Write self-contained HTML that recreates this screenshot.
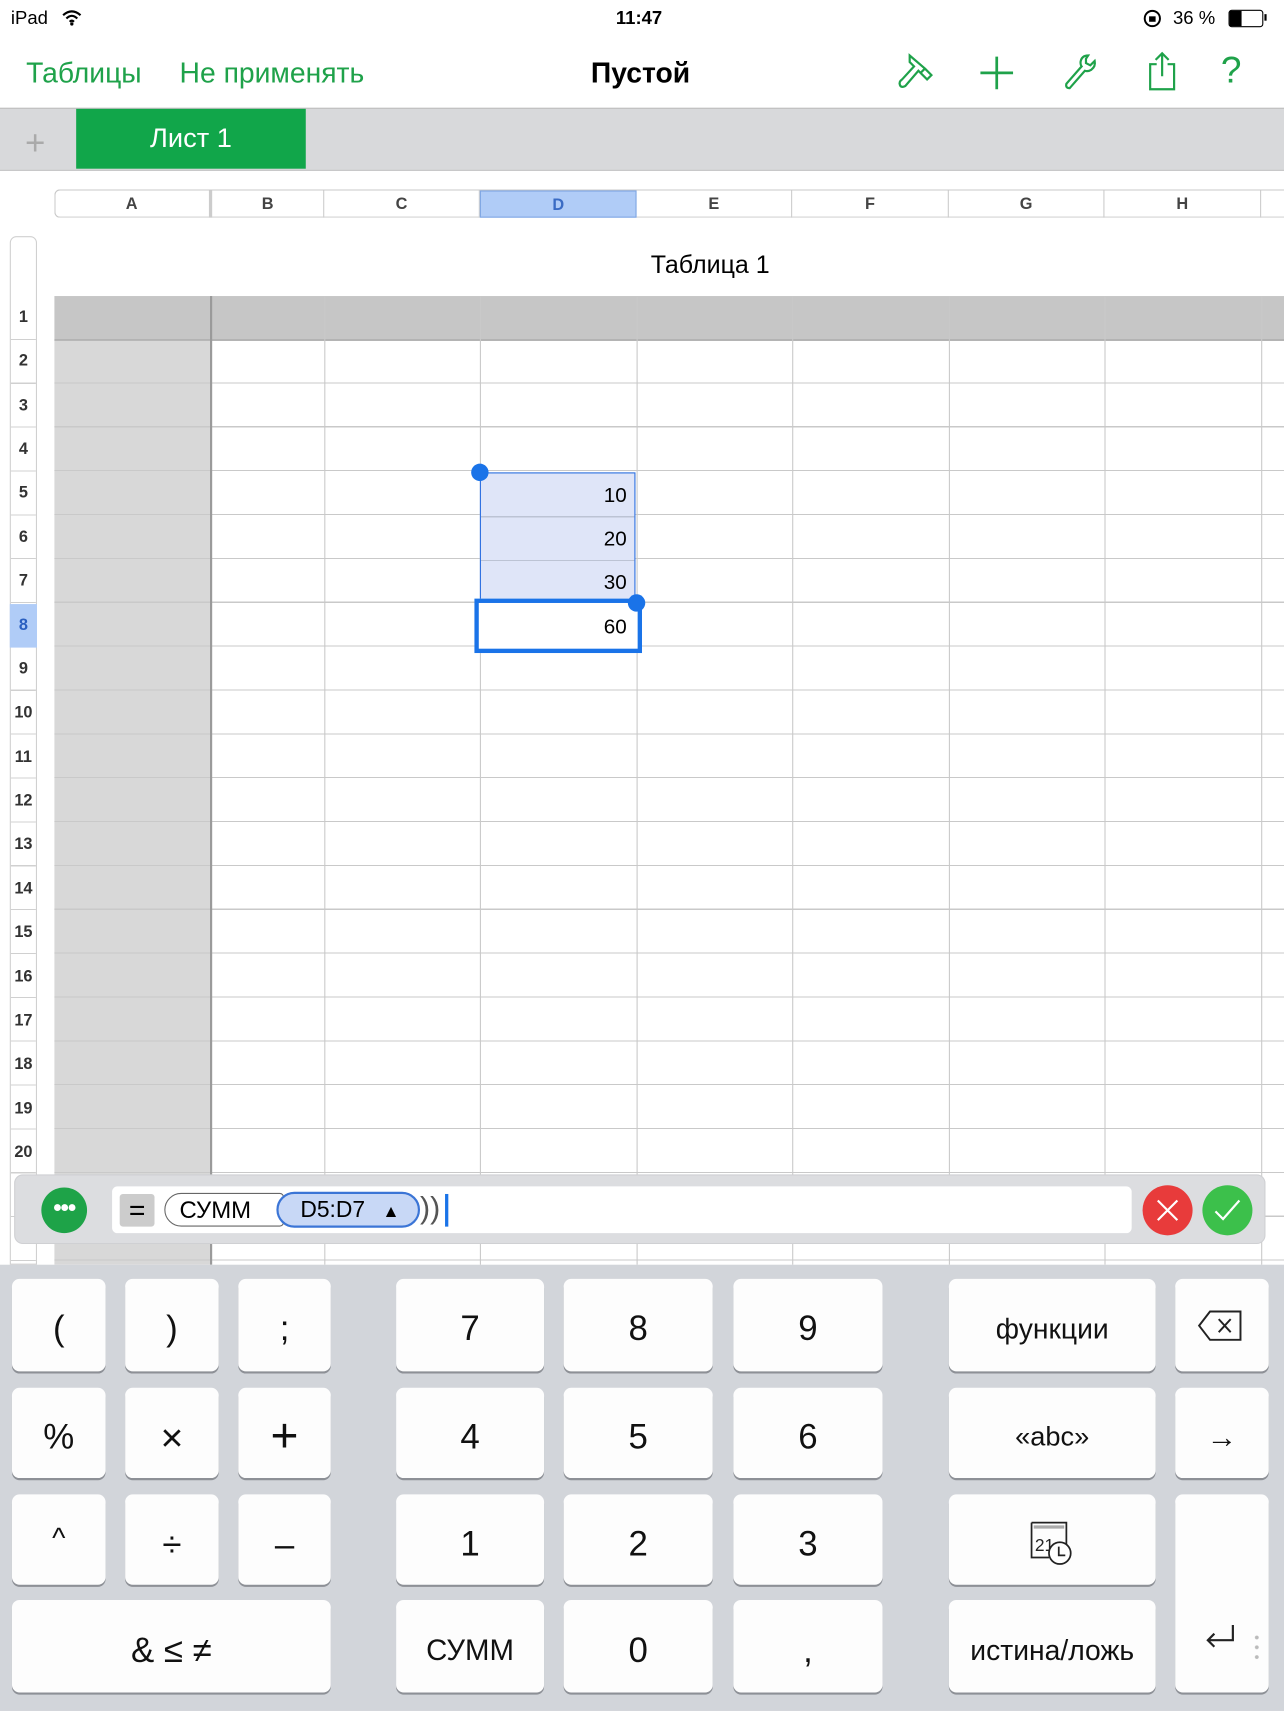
<!DOCTYPE html>
<html><head><meta charset="utf-8"><style>
html,body{margin:0;padding:0;width:1284px;height:1711px;overflow:hidden;background:#fff;}
#s{position:absolute;left:0;top:0;width:1180px;height:1572px;transform:scale(1.08814,1.0884);transform-origin:0 0;font-family:"Liberation Sans","DejaVu Sans",sans-serif;color:#000;}
.a{position:absolute;}
.g{color:#1fa24a;font-size:26px;}
.ch{position:absolute;top:175px;height:25px;line-height:25px;text-align:center;font-size:15px;font-weight:bold;color:#444;border-right:1px solid #ccc;box-sizing:border-box;}
.rn{position:absolute;left:9px;width:25px;font-size:15px;font-weight:bold;color:#333;text-align:center;line-height:40px;height:40px;}
.vl{position:absolute;top:272px;height:890px;width:1px;background:#c9c9c9;}
.k{position:absolute;background:#fdfdfd;border-radius:7px;box-shadow:0 2px 0 #8d9096;text-align:center;font-size:32px;color:#111;}
.num{position:absolute;right:10px;font-size:19px;}
</style></head><body><div id="s">
<div class="a" style="left:10px;top:7px;font-size:17px;">iPad</div>
<svg class="a" style="left:56px;top:8px" width="20" height="16" viewBox="0 0 20 16"><path d="M2 6 Q10 -1 18 6 M5 9 Q10 4 15 9 M8 12 Q10 10 12 12" stroke="#000" stroke-width="2" fill="none"/><circle cx="10" cy="14" r="1.5"/></svg>
<div class="a" style="left:566px;top:7px;font-size:17px;font-weight:bold;">11:47</div>
<svg class="a" style="left:1050px;top:8px" width="18" height="18" viewBox="0 0 18 18"><circle cx="9" cy="9" r="7" stroke="#000" stroke-width="1.8" fill="none"/><rect x="6" y="7" width="6" height="5" fill="#000"/></svg>
<div class="a" style="left:1078px;top:7px;font-size:17px;">36 %</div>
<div class="a" style="left:1129px;top:9px;width:30px;height:14px;border:1.5px solid #000;border-radius:3px;"><div style="width:11px;height:14px;background:#000"></div></div>
<div class="a" style="left:1162px;top:13px;width:2px;height:6px;background:#000"></div>
<div class="a g" style="left:24px;top:52px;">Таблицы</div>
<div class="a g" style="left:165px;top:52px;">Не применять</div>
<div class="a" style="left:543px;top:52px;font-size:26px;font-weight:bold;">Пустой</div>
<svg class="a" style="left:822px;top:47px" width="40" height="38" viewBox="0 0 40 38" fill="none" stroke="#1fa24a" stroke-width="2"><path d="M14 4 L28 16 L24 20 L22 18 L10 32 Q6 34 5 31 Q4 28 7 26 L18 14 L14 10 Z M28 16 L34 22 L30 26 L24 20"/></svg>
<svg class="a" style="left:899px;top:50px" width="34" height="34" viewBox="0 0 34 34" stroke="#1fa24a" stroke-width="2.5"><path d="M17 2 V32 M2 17 H32"/></svg>
<svg class="a" style="left:974px;top:47px" width="36" height="38" viewBox="0 0 36 38" fill="none" stroke="#1fa24a" stroke-width="2"><path d="M26 4 Q20 4 19 10 Q19 13 20 14 L6 30 Q5 34 9 34 L23 18 Q26 19 29 17 Q33 14 32 9 L28 13 L24 11 L24 7 Z"/></svg>
<svg class="a" style="left:1054px;top:47px" width="28" height="38" viewBox="0 0 28 38" fill="none" stroke="#1fa24a" stroke-width="2"><path d="M9 12 H3 V35 H25 V12 H19 M14 2 V23 M8 8 L14 2 L20 8"/></svg>
<div class="a" style="left:1122px;top:46px;font-size:34px;color:#1fa24a;">?</div>
<div class="a" style="left:0;top:99px;width:1180px;height:56px;background:#d8d9db;border-top:1px solid #bdbdbd;border-bottom:1px solid #c5c5c5;"></div>
<div class="a" style="left:23px;top:113px;font-size:32px;color:#aaa;font-weight:300;">+</div>
<div class="a" style="left:70px;top:100px;width:211px;height:55px;background:#11a64a;color:#fff;font-size:25px;text-align:center;line-height:55px;">Лист 1</div>
<div class="a" style="left:50px;top:174px;width:1130px;height:26px;border:1px solid #c8c8c8;border-right:none;border-radius:5px 0 0 5px;box-sizing:border-box;"></div>
<div class="ch" style="left:50px;width:143px;">A</div>
<div class="ch" style="left:193px;width:105px;border-left:2px solid #ccc">B</div>
<div class="ch" style="left:298px;width:143px;">C</div>
<div class="ch" style="left:441px;width:144px;background:#b0ccf7;border:1px solid #7fa6e3;color:#3a6bc4;">D</div>
<div class="ch" style="left:585px;width:143px;">E</div>
<div class="ch" style="left:728px;width:144px;">F</div>
<div class="ch" style="left:872px;width:143px;">G</div>
<div class="ch" style="left:1015px;width:144px;">H</div>
<div class="a" style="left:598px;top:230px;font-size:23px;">Таблица 1</div>
<div class="a" style="left:50px;top:272px;width:1130px;height:40px;background:#c6c6c6;border-bottom:1px solid #999;"></div>
<div class="a" style="left:50px;top:313px;width:143px;height:849px;background:#d8d8d8;"></div>
<div class="a" style="left:50px;top:312px;width:1130px;height:850px;background:repeating-linear-gradient(to bottom,transparent 0,transparent 39.3px,#c9c9c9 39.3px,#c9c9c9 40.3px);"></div>
<div class="vl" style="left:193px;width:2px;background:#9a9a9a"></div>
<div class="vl" style="left:298px"></div><div class="vl" style="left:441px"></div><div class="vl" style="left:585px"></div><div class="vl" style="left:728px"></div><div class="vl" style="left:872px"></div><div class="vl" style="left:1015px"></div><div class="vl" style="left:1159px"></div>
<div class="a" style="left:441px;top:434px;width:143px;height:121px;background:#dfe5f8;border:1.5px solid #2a6ee0;box-sizing:border-box;background-image:repeating-linear-gradient(to bottom,transparent 0,transparent 39.3px,#bcc3d4 39.3px,#bcc3d4 40.3px);"></div>
<div class="num" style="left:0;width:576px;text-align:right;top:445px;">10</div>
<div class="num" style="left:0;width:576px;text-align:right;top:485px;">20</div>
<div class="num" style="left:0;width:576px;text-align:right;top:525px;">30</div>
<div class="a" style="left:436px;top:550px;width:154px;height:50px;border:4px solid #1a73e8;box-sizing:border-box;background:#fff;"></div>
<div class="num" style="left:0;width:576px;text-align:right;top:566px;">60</div>
<div class="a" style="left:433px;top:426px;width:16px;height:16px;border-radius:50%;background:#1a73e8;"></div>
<div class="a" style="left:577px;top:546px;width:16px;height:16px;border-radius:50%;background:#1a73e8;"></div>
<div class="a" style="left:9px;top:217px;width:25px;height:945px;border:1px solid #d0d0d0;border-radius:6px 6px 0 0;box-sizing:border-box;"></div>
<div class="a" style="left:10px;top:272px;width:23px;height:890px;background:repeating-linear-gradient(to bottom,transparent 0,transparent 39.3px,#d0d0d0 39.3px,#d0d0d0 40.3px);"></div>
<div class="a" style="left:9px;top:555px;width:25px;height:40px;background:#b0ccf7;"></div>
<div class="rn" style="top:272px">1</div><div class="rn" style="top:312px">2</div><div class="rn" style="top:353px">3</div><div class="rn" style="top:393px">4</div><div class="rn" style="top:433px">5</div><div class="rn" style="top:474px">6</div><div class="rn" style="top:514px">7</div><div class="rn" style="top:555px;color:#2a5fc0">8</div><div class="rn" style="top:595px">9</div><div class="rn" style="top:635px">10</div><div class="rn" style="top:676px">11</div><div class="rn" style="top:716px">12</div><div class="rn" style="top:756px">13</div><div class="rn" style="top:797px">14</div><div class="rn" style="top:837px">15</div><div class="rn" style="top:878px">16</div><div class="rn" style="top:918px">17</div><div class="rn" style="top:958px">18</div><div class="rn" style="top:999px">19</div><div class="rn" style="top:1039px">20</div>
<div class="a" style="left:13px;top:1079px;width:1150px;height:64px;background:#dcdde0;border-radius:8px;border:1px solid #cfd0d3;box-sizing:border-box;"></div>
<div class="a" style="left:38px;top:1091px;width:42px;height:42px;border-radius:50%;background:#1ea348;color:#fff;font-size:22px;text-align:center;line-height:38px;font-weight:bold;letter-spacing:-1px;">•••</div>
<div class="a" style="left:103px;top:1090px;width:937px;height:43px;background:#fff;border-radius:5px;"></div>
<div class="a" style="left:110px;top:1097px;width:32px;height:30px;background:#ccc;border-radius:3px;font-size:26px;text-align:center;line-height:30px;">=</div>
<div class="a" style="left:151px;top:1096px;width:110px;height:31px;border:1.5px solid #666;border-radius:16px 4px 4px 16px;box-sizing:border-box;font-size:22px;line-height:29px;padding-left:13px;">СУММ</div>
<div class="a" style="left:254px;top:1095px;width:132px;height:33px;border:2px solid #3b75d6;background:#c8d8f6;border-radius:17px;box-sizing:border-box;font-size:21px;line-height:29px;padding-left:20px;">D5:D7 <span style="font-size:16px;margin-left:10px">▲</span></div>
<div class="a" style="left:386px;top:1094px;font-size:28px;color:#555;">))</div>
<div class="a" style="left:409px;top:1097px;width:3px;height:30px;background:#1a73e8;"></div>
<div class="a" style="left:1050px;top:1089px;width:46px;height:46px;border-radius:50%;background:#e83b3b;"><svg width="46" height="46"><path d="M14 14 L32 32 M32 14 L14 32" stroke="#fff" stroke-width="2"/></svg></div>
<div class="a" style="left:1105px;top:1089px;width:46px;height:46px;border-radius:50%;background:#3cc04b;"><svg width="46" height="46"><path d="M12 24 L19 31 L34 14" stroke="#fff" stroke-width="2" fill="none"/></svg></div>
<div class="a" style="left:0;top:1162px;width:1180px;height:410px;background:#d2d5da;"></div>
<div class="k" style="left:11px;top:1175px;width:86px;height:85px;line-height:90px;">(</div>
<div class="k" style="left:115px;top:1175px;width:86px;height:85px;line-height:90px;">)</div>
<div class="k" style="left:219px;top:1175px;width:85px;height:85px;line-height:90px;">;</div>
<div class="k" style="left:364px;top:1175px;width:136px;height:85px;line-height:90px;">7</div>
<div class="k" style="left:518px;top:1175px;width:137px;height:85px;line-height:90px;">8</div>
<div class="k" style="left:674px;top:1175px;width:137px;height:85px;line-height:90px;">9</div>
<div class="k" style="left:872px;top:1175px;width:190px;height:85px;line-height:92px;font-size:26px;">функции</div>
<div class="k" style="left:1080px;top:1175px;width:86px;height:85px;"><svg class="a" style="left:20px;top:28px" width="44" height="30" viewBox="0 0 44 30" fill="none" stroke="#222" stroke-width="1.8"><path d="M12 2 H40 V28 H12 L2 15 Z M20 9 L31 21 M31 9 L20 21"/></svg></div>
<div class="k" style="left:11px;top:1275px;width:86px;height:83px;line-height:90px;">%</div>
<div class="k" style="left:115px;top:1275px;width:86px;height:83px;line-height:92px;font-size:36px;">×</div>
<div class="k" style="left:219px;top:1275px;width:85px;height:83px;line-height:90px;font-size:44px;font-weight:200;">+</div>
<div class="k" style="left:364px;top:1275px;width:136px;height:83px;line-height:90px;">4</div>
<div class="k" style="left:518px;top:1275px;width:137px;height:83px;line-height:90px;">5</div>
<div class="k" style="left:674px;top:1275px;width:137px;height:83px;line-height:90px;">6</div>
<div class="k" style="left:872px;top:1275px;width:190px;height:83px;line-height:90px;font-size:25px;">«abc»</div>
<div class="k" style="left:1080px;top:1275px;width:86px;height:83px;line-height:92px;font-size:28px;">→</div>
<div class="k" style="left:11px;top:1373px;width:86px;height:83px;line-height:80px;font-size:26px;">^</div>
<div class="k" style="left:115px;top:1373px;width:86px;height:83px;line-height:92px;">÷</div>
<div class="k" style="left:219px;top:1373px;width:85px;height:83px;line-height:92px;">–</div>
<div class="k" style="left:364px;top:1373px;width:136px;height:83px;line-height:90px;">1</div>
<div class="k" style="left:518px;top:1373px;width:137px;height:83px;line-height:90px;">2</div>
<div class="k" style="left:674px;top:1373px;width:137px;height:83px;line-height:90px;">3</div>
<div class="k" style="left:872px;top:1373px;width:190px;height:83px;"><svg class="a" style="left:74px;top:24px" width="44" height="42" viewBox="0 0 44 42" fill="none" stroke="#222" stroke-width="1.6"><path d="M2 2 H34 V24 M2 2 V34 H18"/><path d="M4 6 H32" stroke-width="3" stroke="#aaa"/><text x="5" y="28" font-size="16" fill="#222" stroke="none" font-family="Liberation Sans">21</text><circle cx="28" cy="30" r="10" fill="#fff"/><path d="M27 24 V32 H33"/></svg></div>
<div class="k" style="left:1080px;top:1373px;width:86px;height:182px;"><svg class="a" style="left:26px;top:118px" width="30" height="26" viewBox="0 0 30 26" fill="none" stroke="#222" stroke-width="2"><path d="M27 2 V16 H4 M10 10 L4 16 L10 22"/></svg></div>
<div class="k" style="left:11px;top:1470px;width:293px;height:85px;line-height:92px;">&amp; ≤ ≠</div>
<div class="k" style="left:364px;top:1470px;width:136px;height:85px;line-height:92px;font-size:27px;">СУММ</div>
<div class="k" style="left:518px;top:1470px;width:137px;height:85px;line-height:92px;">0</div>
<div class="k" style="left:674px;top:1470px;width:137px;height:85px;line-height:92px;">,</div>
<div class="k" style="left:872px;top:1470px;width:190px;height:85px;line-height:92px;font-size:26px;">истина/ложь</div>
<div class="a" style="left:1153px;top:1500px;width:4px;height:26px;background:radial-gradient(circle,#bbb 1.5px,transparent 2px) 0 0/4px 9px;"></div>
</div></body></html>
